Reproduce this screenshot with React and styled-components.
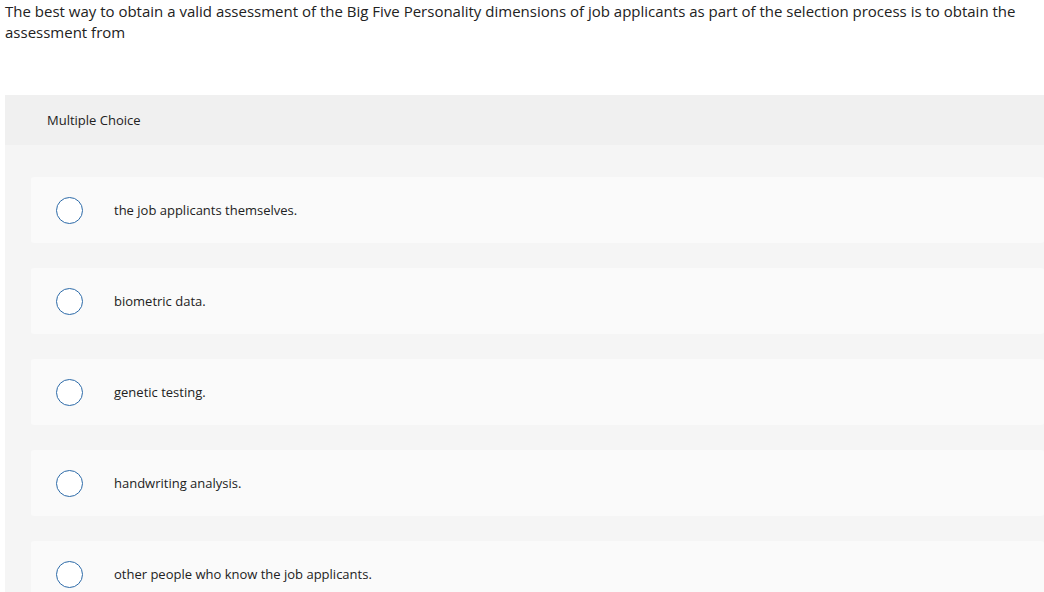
import React from "react";
import styled, { createGlobalStyle } from "styled-components";

const Global = createGlobalStyle`
  html, body { margin: 0; padding: 0; background: #fff; overflow: hidden; }
  body { font-family: "Open Sans", Lato, sans-serif; color: #1f1f1f; }
`;

const Page = styled.div`
  width: 1044px;
  height: 592px;
  overflow: hidden;
`;

const Question = styled.p`
  margin: 0;
  padding: 1px 20px 0 5px;
  font-size: 15px;
  line-height: 21px;
  color: #222;
`;

const Panel = styled.section`
  margin: 52px 0 0 5px;
  background: #f5f5f5;
  padding-bottom: 20px;
`;

const Header = styled.div`
  height: 50px;
  display: flex;
  align-items: center;
  padding-left: 42px;
  background: #f0f0f0;
  font-size: 13px;
  color: #222;
`;

const Options = styled.div`
  display: flex;
  flex-direction: column;
  gap: 25px;
  padding: 32px 0 0 26px;
`;

const Option = styled.label`
  display: flex;
  align-items: center;
  height: 66px;
  background: #fafafa;
  border-radius: 3px;
  padding-left: 25px;
  font-size: 13px;
  color: #222;
  cursor: pointer;
`;

const Radio = styled.span`
  width: 25px;
  height: 25px;
  border: 1.5px solid #2c6aa8;
  border-radius: 50%;
  background: #fff;
  flex: none;
  margin-right: 31px;
`;

const options = [
  "the job applicants themselves.",
  "biometric data.",
  "genetic testing.",
  "handwriting analysis.",
  "other people who know the job applicants.",
];

export default function App() {
  return (
    <Page>
      <Global />
      <Question>
        The best way to obtain a valid assessment of the Big Five Personality dimensions of job
        applicants as part of the selection process is to obtain the assessment from
      </Question>
      <Panel>
        <Header>Multiple Choice</Header>
        <Options>
          {options.map((o) => (
            <Option key={o}>
              <Radio />
              {o}
            </Option>
          ))}
        </Options>
      </Panel>
    </Page>
  );
}
